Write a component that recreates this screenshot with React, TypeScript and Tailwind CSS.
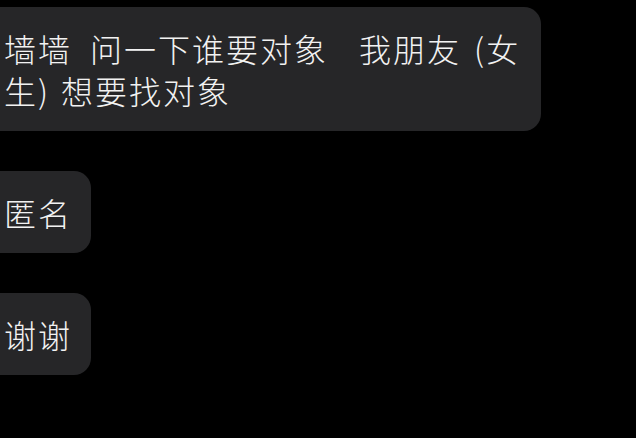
export default function App() {
  return (
    <div
      className="min-h-screen w-full overflow-hidden bg-black pt-[7px]"
      style={{ fontFamily: '"Noto Sans CJK SC", "Noto Sans", sans-serif' }}
    >
      <div className="flex flex-col items-start gap-[40px]">
        <Bubble className="pr-[21px]">
          墙墙<Gap w="w-[18px]" />问一下谁要对象<Gap w="w-[31px]" />我朋友<Gap w="w-[13px]" />(女
          <br />
          生)<Gap w="w-[11px]" />想要找对象
        </Bubble>
        <Bubble className="pr-[19px]">匿名</Bubble>
        <Bubble className="pr-[19px]">谢谢</Bubble>
      </div>
    </div>
  )
}

function Gap({ w }: { w: string }) {
  return <span className={`inline-block ${w}`}> </span>
}

function Bubble({ children, className }: { children: React.ReactNode; className: string }) {
  return (
    <div
      className={`-ml-[16px] whitespace-pre rounded-[17px] bg-[#262628] py-[20px] pl-[20px] text-[32px] font-light leading-[42px] tracking-[2px] text-[#f2f2f2] ${className}`}
    >
      {children}
    </div>
  )
}
